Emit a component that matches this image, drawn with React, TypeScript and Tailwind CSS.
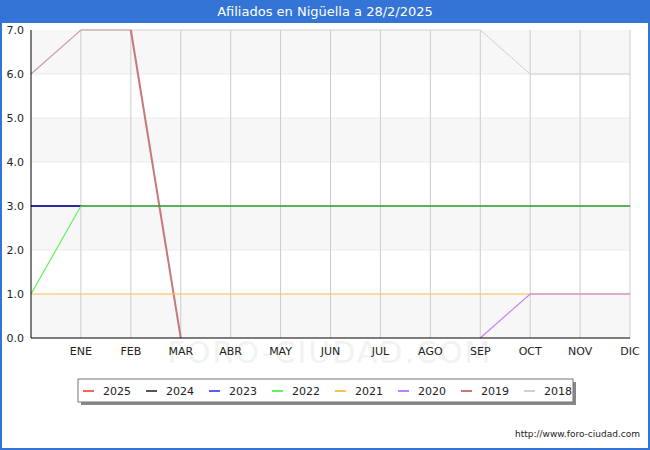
import React from "react";

const X = (i: number) => 31 + (599 / 12) * i;
const Y = (v: number) => 315 - 44 * v;
const months = ["ENE","FEB","MAR","ABR","MAY","JUN","JUL","AGO","SEP","OCT","NOV","DIC"];
const pts = (a: [number, number][]) => a.map(([i, v]) => `${X(i)},${Y(v)}`).join(" ");
const legend = [
  ["2025", "#ff5f5f"], ["2024", "#555555"], ["2023", "#5b5bff"], ["2022", "#5cf55c"],
  ["2021", "#ffc04d"], ["2020", "#c67cff"], ["2019", "#c87878"], ["2018", "#d0d0d0"],
];

export default function App() {
  return (
    <div className="w-[650px] h-[450px] bg-white border-2 border-[#3374d6] border-t-0 flex flex-col" style={{ fontFamily: "'DejaVu Sans', sans-serif" }}>
      <div className="h-[23px] bg-[#3374d6] text-white text-[13px] flex items-center justify-center">Afiliados en Nigüella a 28/2/2025</div>
      <div className="relative flex-1">
        <svg width="648" height="427" className="absolute left-[-2px] top-0" style={{ fontFamily: "'DejaVu Sans', sans-serif" }}>
          {[0, 2, 4, 6].map((k) => (
            <rect key={k} x={31} y={Y(k + 1)} width={599} height={44} fill="#f7f7f7" />
          ))}
          {[1, 2, 3, 4, 5, 6].map((v) => (
            <line key={v} x1={31} x2={630} y1={Y(v)} y2={Y(v)} stroke="#ececec" />
          ))}
          {months.map((_, i) => (
            <line key={i} x1={X(i + 1)} x2={X(i + 1)} y1={7} y2={315} stroke="#cccccc" />
          ))}
          <text x={330} y={340} fontSize={30} fill="#f2f2f2" textAnchor="middle" letterSpacing={2}>FORO-CIUDAD.COM</text>
          <polyline points={pts([[1,7],[9,7],[10,6],[12,6]])} fill="none" stroke="#d0d0d0" strokeWidth={1} />
          <polyline points={pts([[0,6],[1,7],[2,7]])} fill="none" stroke="#c8a0a0" strokeWidth={1.2} />
          <polyline points={pts([[2,7],[3,0]])} fill="none" stroke="#c87878" strokeWidth={2} />
          <polyline points={pts([[0,1],[12,1]])} fill="none" stroke="#ffc04d" strokeWidth={1.2} />
          <polyline points={pts([[9,0],[10,1],[12,1]])} fill="none" stroke="#c67cff" strokeWidth={1.2} />
          <polyline points={pts([[0,3],[1,3]])} fill="none" stroke="#2a2aa8" strokeWidth={2} />
          <polyline points={pts([[0,1],[1,3]])} fill="none" stroke="#5cf55c" strokeWidth={1.2} />
          <polyline points={pts([[1,3],[12,3]])} fill="none" stroke="#2a9a2a" strokeWidth={1.6} />
          <line x1={31} x2={31} y1={7} y2={315} stroke="#000" />
          <line x1={31} x2={630} y1={315} y2={315} stroke="#000" />
          {[0,1,2,3,4,5,6,7].map((v) => (
            <text key={v} x={24} y={Y(v) + 4} fontSize={11} textAnchor="end" fill="#222">{v.toFixed(1)}</text>
          ))}
          {months.map((m, i) => (
            <text key={m} x={X(i + 1)} y={332} fontSize={11} textAnchor="middle" fill="#222">{m}</text>
          ))}
          <rect x={81} y={359} width={495} height={23} fill="#888" />
          <rect x={78} y={356} width={495} height={23} fill="#fff" stroke="#777" />
          {legend.map(([n, c], i) => (
            <g key={n} transform={`translate(${83 + i * 63},0)`}>
              <rect x={0} y={367} width={11} height={2} fill={c} />
              <text x={20} y={372} fontSize={11} fill="#222">{n}</text>
            </g>
          ))}
          <text x={640} y={414} fontSize={9} textAnchor="end" fill="#222">http://www.foro-ciudad.com</text>
        </svg>
      </div>
    </div>
  );
}
